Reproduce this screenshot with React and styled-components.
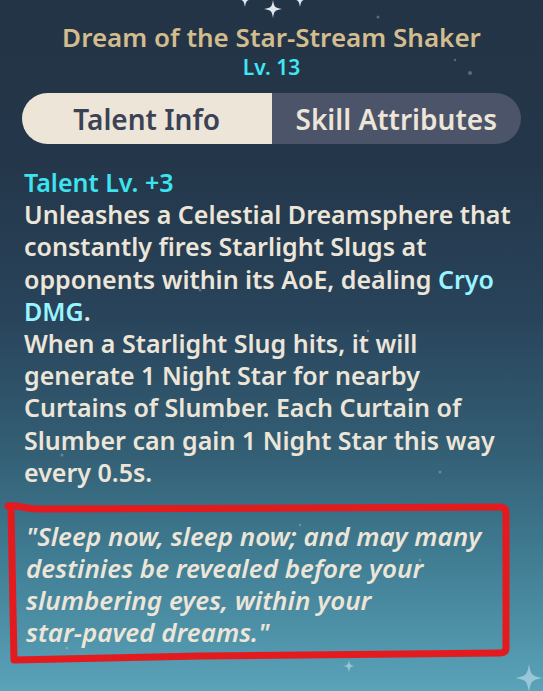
import React from 'react';
import styled, { createGlobalStyle } from 'styled-components';

const GlobalStyle = createGlobalStyle`
  html, body {
    margin: 0;
    padding: 0;
    background: #233446;
  }
  * {
    box-sizing: border-box;
  }
`;

const Star = ({ cx, cy, r }) => (
  <path
    d={`M ${cx} ${cy - r} C ${cx + r * 0.14} ${cy - r * 0.2} ${cx + r * 0.2} ${cy - r * 0.14} ${cx + r} ${cy}
        C ${cx + r * 0.2} ${cy + r * 0.14} ${cx + r * 0.14} ${cy + r * 0.2} ${cx} ${cy + r}
        C ${cx - r * 0.14} ${cy + r * 0.2} ${cx - r * 0.2} ${cy + r * 0.14} ${cx - r} ${cy}
        C ${cx - r * 0.2} ${cy - r * 0.14} ${cx - r * 0.14} ${cy - r * 0.2} ${cx} ${cy - r} Z`}
  />
);

const App = () => {
  return (
    <>
      <GlobalStyle />
      <Page>
        <Sparkles width="543" height="691" viewBox="0 0 543 691">
          <g fill="#dfe6ee">
            <Star cx={245} cy={-1} r={8} />
            <Star cx={273} cy={9} r={9} />
            <Star cx={300} cy={-1} r={8} />
          </g>
          <g fill="#cfe8f2" opacity="0.55">
            <Star cx={349} cy={666} r={6} />
            <Star cx={529} cy={678} r={14} />
          </g>
          <g fill="#b9d3df" opacity="0.35">
            <circle cx="378" cy="17" r="1.5" />
            <circle cx="455" cy="60" r="1.2" />
            <circle cx="470" cy="73" r="2" />
            <circle cx="200" cy="290" r="1.5" />
            <circle cx="380" cy="273" r="1.5" />
            <circle cx="368" cy="331" r="1.2" />
            <circle cx="440" cy="472" r="1.5" />
            <circle cx="62" cy="455" r="1.5" />
            <circle cx="45" cy="508" r="2" />
            <circle cx="67" cy="648" r="1.5" />
            <circle cx="300" cy="525" r="1.2" />
            <circle cx="420" cy="560" r="1.5" />
          </g>
        </Sparkles>

        <Header>
          <Title>Dream of the Star-Stream Shaker</Title>
          <Level>Lv. 13</Level>
        </Header>

        <TabBar>
          <Tab $active>Talent Info</Tab>
          <Tab>Skill Attributes</Tab>
        </TabBar>

        <Description>
          <Highlight>Talent Lv. +3</Highlight>
          <br />
          Unleashes a Celestial Dreamsphere that
          <br />
          constantly fires Starlight Slugs at
          <br />
          opponents within its AoE, dealing <Cryo>Cryo</Cryo>
          <br />
          <Cryo>DMG</Cryo>.
          <br />
          When a Starlight Slug hits, it will
          <br />
          generate 1 Night Star for nearby
          <br />
          Curtains of Slumber. Each Curtain of
          <br />
          Slumber can gain 1 Night Star this way
          <br />
          every 0.5s.
        </Description>

        <QuoteBlock>
          <Quote>
            "Sleep now, sleep now; and may many
            <br />
            destinies be revealed before your
            <br />
            slumbering eyes, within your
            <br />
            star-paved dreams."
          </Quote>
          <Annotation width="543" height="180" viewBox="0 0 543 180">
            <path
              d="M 8 4 C 16 2 22 7 40 7 L 300 6 L 500 5 Q 506 5 506 11 L 506 146 Q 506 151 500 151 L 200 154 L 14 158 L 11 6"
              fill="none"
              stroke="#e31b1f"
              strokeWidth="7"
              strokeLinecap="round"
              strokeLinejoin="round"
            />
          </Annotation>
        </QuoteBlock>
      </Page>
    </>
  );
};

const Page = styled.div`
  position: relative;
  width: 543px;
  height: 691px;
  overflow: hidden;
  padding: 20px 22px 0;
  background: linear-gradient(
    180deg,
    #233446 0%,
    #243649 22%,
    #28435a 45%,
    #335e74 65%,
    #3f7b91 80%,
    #5aa3b9 100%
  );
  font-family: 'Noto Sans', 'Open Sans', sans-serif;
`;

const Sparkles = styled.svg`
  position: absolute;
  top: 0;
  left: 0;
  pointer-events: none;
`;

const Header = styled.div`
  position: relative;
  display: flex;
  flex-direction: column;
  align-items: center;
`;

const Title = styled.div`
  font-size: 26px;
  font-weight: 600;
  line-height: 34px;
  color: #d3bc8e;
  white-space: nowrap;
`;

const Level = styled.div`
  font-size: 21px;
  font-weight: 600;
  line-height: 26px;
  color: #3fe7f2;
`;

const TabBar = styled.div`
  position: relative;
  display: flex;
  height: 51px;
  margin-top: 13px;
  border-radius: 26px;
  overflow: hidden;
`;

const Tab = styled.div`
  flex: 1;
  display: flex;
  align-items: center;
  justify-content: center;
  font-size: 28px;
  font-weight: 600;
  background: ${(p) => (p.$active ? '#ece5d8' : '#4b5469')};
  color: ${(p) => (p.$active ? '#3b4255' : '#ece5d8')};
  white-space: nowrap;
`;

const Description = styled.div`
  position: relative;
  margin-top: 22px;
  padding-left: 2px;
  font-size: 25px;
  font-weight: 600;
  line-height: 32.2px;
  color: #ece5d8;
  white-space: nowrap;
`;

const Highlight = styled.span`
  color: #3ee3f0;
`;

const Cryo = styled.span`
  color: #99f4ff;
`;

const QuoteBlock = styled.div`
  position: relative;
  margin: 14px 0 0 -22px;
  width: 543px;
  height: 180px;
`;

const Quote = styled.div`
  padding: 18px 0 0 26px;
  font-size: 26px;
  font-style: italic;
  font-weight: 600;
  line-height: 32px;
  color: #ece5d8;
  white-space: nowrap;
`;

const Annotation = styled.svg`
  position: absolute;
  top: 0;
  left: 0;
  pointer-events: none;
`;

export default App;
